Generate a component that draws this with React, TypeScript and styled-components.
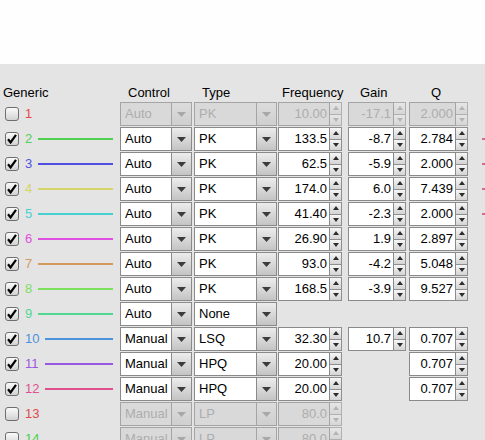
import React from "react";
import styled, { createGlobalStyle, css } from "styled-components";

const GlobalStyle = createGlobalStyle`
  html, body {
    margin: 0;
    padding: 0;
    background: #fefefe;
  }
  body {
    font-family: "Liberation Sans", Arial, sans-serif;
    font-size: 13px;
    color: #000;
    overflow: hidden;
  }
`;

type Row = {
  n: number;
  color: string;
  checked: boolean;
  disabled?: boolean;
  control: string;
  type: string;
  freq?: string;
  gain?: string;
  q?: string;
  tail?: boolean;
};

const rows: Row[] = [
  { n: 1, color: "#e84848", checked: false, disabled: true, control: "Auto", type: "PK", freq: "10.00", gain: "-17.1", q: "2.000" },
  { n: 2, color: "#50d050", checked: true, control: "Auto", type: "PK", freq: "133.5", gain: "-8.7", q: "2.784", tail: true },
  { n: 3, color: "#5050e0", checked: true, control: "Auto", type: "PK", freq: "62.5", gain: "-5.9", q: "2.000", tail: true },
  { n: 4, color: "#d4d468", checked: true, control: "Auto", type: "PK", freq: "174.0", gain: "6.0", q: "7.439", tail: true },
  { n: 5, color: "#48d0d0", checked: true, control: "Auto", type: "PK", freq: "41.40", gain: "-2.3", q: "2.000", tail: true },
  { n: 6, color: "#e050e0", checked: true, control: "Auto", type: "PK", freq: "26.90", gain: "1.9", q: "2.897" },
  { n: 7, color: "#d49a5c", checked: true, control: "Auto", type: "PK", freq: "93.0", gain: "-4.2", q: "5.048" },
  { n: 8, color: "#7ce05c", checked: true, control: "Auto", type: "PK", freq: "168.5", gain: "-3.9", q: "9.527" },
  { n: 9, color: "#50d890", checked: true, control: "Auto", type: "None" },
  { n: 10, color: "#4a92dc", checked: true, control: "Manual", type: "LSQ", freq: "32.30", gain: "10.7", q: "0.707" },
  { n: 11, color: "#9a58e0", checked: true, control: "Manual", type: "HPQ", freq: "20.00", q: "0.707" },
  { n: 12, color: "#e0508c", checked: true, control: "Manual", type: "HPQ", freq: "20.00", q: "0.707" },
  { n: 13, color: "#e04848", checked: false, disabled: true, control: "Manual", type: "LP", freq: "80.0" },
  { n: 14, color: "#48d048", checked: false, disabled: true, control: "Manual", type: "LP", freq: "80.0" },
];

const TopArea = styled.div`
  height: 64px;
  background: #fefefe;
`;

const Panel = styled.div`
  background: #e4e4e4;
  padding-top: 20px;
  min-height: 400px;
`;

const columns = "120px 74px 84px 70px 61px 59px 1fr";

const HeaderRow = styled.div`
  display: grid;
  grid-template-columns: ${columns};
  height: 17px;
  line-height: 17px;
`;

const HeaderCell = styled.div<{ $pad: number }>`
  padding-left: ${(p) => p.$pad}px;
  white-space: nowrap;
`;

const TableRow = styled.div`
  display: grid;
  grid-template-columns: ${columns};
  height: 25px;
  padding-top: 1px;
  box-sizing: border-box;
  align-items: start;
`;

const GenericCell = styled.div`
  display: flex;
  align-items: center;
  height: 24px;
  padding-left: 5px;
  padding-right: 7px;
`;

const Box = styled.div<{ $checked: boolean }>`
  width: 14px;
  height: 14px;
  box-sizing: border-box;
  border: 1px solid #6e6e6e;
  border-radius: 3px;
  background: linear-gradient(#fafafa, #d2d2d2);
  display: flex;
  align-items: center;
  justify-content: center;
  flex-shrink: 0;
`;

const Num = styled.span<{ $color: string }>`
  color: ${(p) => p.$color};
  margin-left: 6px;
  line-height: 16px;
`;

const Line = styled.div<{ $color: string }>`
  flex: 1;
  height: 2px;
  margin-left: 6px;
  background: ${(p) => p.$color};
`;

const fieldBase = css<{ $disabled?: boolean }>`
  box-sizing: border-box;
  height: 24px;
  border: 1px solid ${(p) => (p.$disabled ? "#a4a4a4" : "#8a8a8a")};
  background: ${(p) => (p.$disabled ? "#d9d9d9" : "#ffffff")};
  color: ${(p) => (p.$disabled ? "#adadad" : "#000")};
  line-height: 22px;
`;

const Combo = styled.div<{ $w: number }>`
  display: flex;
  width: ${(p) => p.$w}px;
  height: 24px;
`;

const ComboText = styled.div<{ $disabled?: boolean }>`
  ${fieldBase};
  flex: 1;
  padding-left: 4px;
  white-space: nowrap;
  overflow: hidden;
`;

const ComboButton = styled.div<{ $disabled?: boolean }>`
  width: 20px;
  height: 24px;
  box-sizing: border-box;
  border: 1px solid ${(p) => (p.$disabled ? "#a4a4a4" : "#8a8a8a")};
  border-left: none;
  background: ${(p) =>
    p.$disabled ? "linear-gradient(#dcdcdc, #cfcfcf)" : "linear-gradient(#ececec, #c4c4c4)"};
  display: flex;
  align-items: center;
  justify-content: center;
`;

const Spin = styled.div<{ $w: number }>`
  display: flex;
  width: ${(p) => p.$w}px;
  height: 24px;
`;

const SpinText = styled.div<{ $disabled?: boolean }>`
  ${fieldBase};
  flex: 1;
  text-align: right;
  padding-right: 2px;
  white-space: nowrap;
`;

const SpinButtons = styled.div`
  width: 12px;
  display: flex;
  flex-direction: column;
`;

const SpinButton = styled.div<{ $disabled?: boolean }>`
  flex: 1;
  box-sizing: border-box;
  border: 1px solid ${(p) => (p.$disabled ? "#b0b0b0" : "#8e8e8e")};
  border-left: none;
  background: ${(p) =>
    p.$disabled ? "linear-gradient(#e6e6e6, #d6d6d6)" : "linear-gradient(#f6f6f6, #d4d4d4)"};
  display: flex;
  align-items: center;
  justify-content: center;
  & + & {
    border-top: none;
  }
`;

const Tail = styled.div`
  align-self: center;
  justify-self: end;
  width: 3px;
  height: 2px;
  margin-top: -1px;
  background: #d86a88;
`;

const Check = () => (
  <svg width="12" height="12" viewBox="0 0 12 12">
    <path d="M2 6.2 L4.6 9.4 L10 1.8" fill="none" stroke="#000" strokeWidth="2.2" strokeLinejoin="miter" />
  </svg>
);

const DownArrow = ({ disabled, w = 9 }: { disabled?: boolean; w?: number }) => (
  <svg width={w} height={Math.ceil(w / 2)} viewBox={`0 0 ${w} ${Math.ceil(w / 2)}`}>
    <polygon points={`0,0 ${w},0 ${w / 2},${Math.ceil(w / 2)}`} fill={disabled ? "#a8a8a8" : "#3c3c3c"} />
  </svg>
);

const SmallArrow = ({ up, disabled }: { up?: boolean; disabled?: boolean }) => (
  <svg width="6" height="4" viewBox="0 0 6 4">
    <polygon points={up ? "0,4 6,4 3,0" : "0,0 6,0 3,4"} fill={disabled ? "#b4b4b4" : "#2c2c2c"} />
  </svg>
);

const ComboBox = ({ value, w, disabled }: { value: string; w: number; disabled?: boolean }) => (
  <Combo $w={w}>
    <ComboText $disabled={disabled}>{value}</ComboText>
    <ComboButton $disabled={disabled}>
      <DownArrow disabled={disabled} />
    </ComboButton>
  </Combo>
);

const SpinBox = ({ value, w, disabled }: { value?: string; w: number; disabled?: boolean }) => {
  if (value === undefined) return <div />;
  return (
    <Spin $w={w}>
      <SpinText $disabled={disabled}>{value}</SpinText>
      <SpinButtons>
        <SpinButton $disabled={disabled}>
          <SmallArrow up disabled={disabled} />
        </SpinButton>
        <SpinButton $disabled={disabled}>
          <SmallArrow disabled={disabled} />
        </SpinButton>
      </SpinButtons>
    </Spin>
  );
};

export default function App() {
  return (
    <>
      <GlobalStyle />
      <TopArea />
      <Panel>
        <HeaderRow>
          <HeaderCell $pad={3}>Generic</HeaderCell>
          <HeaderCell $pad={8}>Control</HeaderCell>
          <HeaderCell $pad={8}>Type</HeaderCell>
          <HeaderCell $pad={4}>Frequency</HeaderCell>
          <HeaderCell $pad={12}>Gain</HeaderCell>
          <HeaderCell $pad={22}>Q</HeaderCell>
          <div />
        </HeaderRow>
        {rows.map((r) => (
          <TableRow key={r.n}>
            <GenericCell>
              <Box $checked={r.checked}>{r.checked && <Check />}</Box>
              <Num $color={r.color}>{r.n}</Num>
              {!r.disabled && <Line $color={r.color} />}
            </GenericCell>
            <ComboBox value={r.control} w={72} disabled={r.disabled} />
            <ComboBox value={r.type} w={83} disabled={r.disabled} />
            <SpinBox value={r.freq} w={64} disabled={r.disabled} />
            <SpinBox value={r.gain} w={58} disabled={r.disabled} />
            <SpinBox value={r.q} w={59} disabled={r.disabled} />
            {r.tail ? <Tail /> : <div />}
          </TableRow>
        ))}
      </Panel>
    </>
  );
}
